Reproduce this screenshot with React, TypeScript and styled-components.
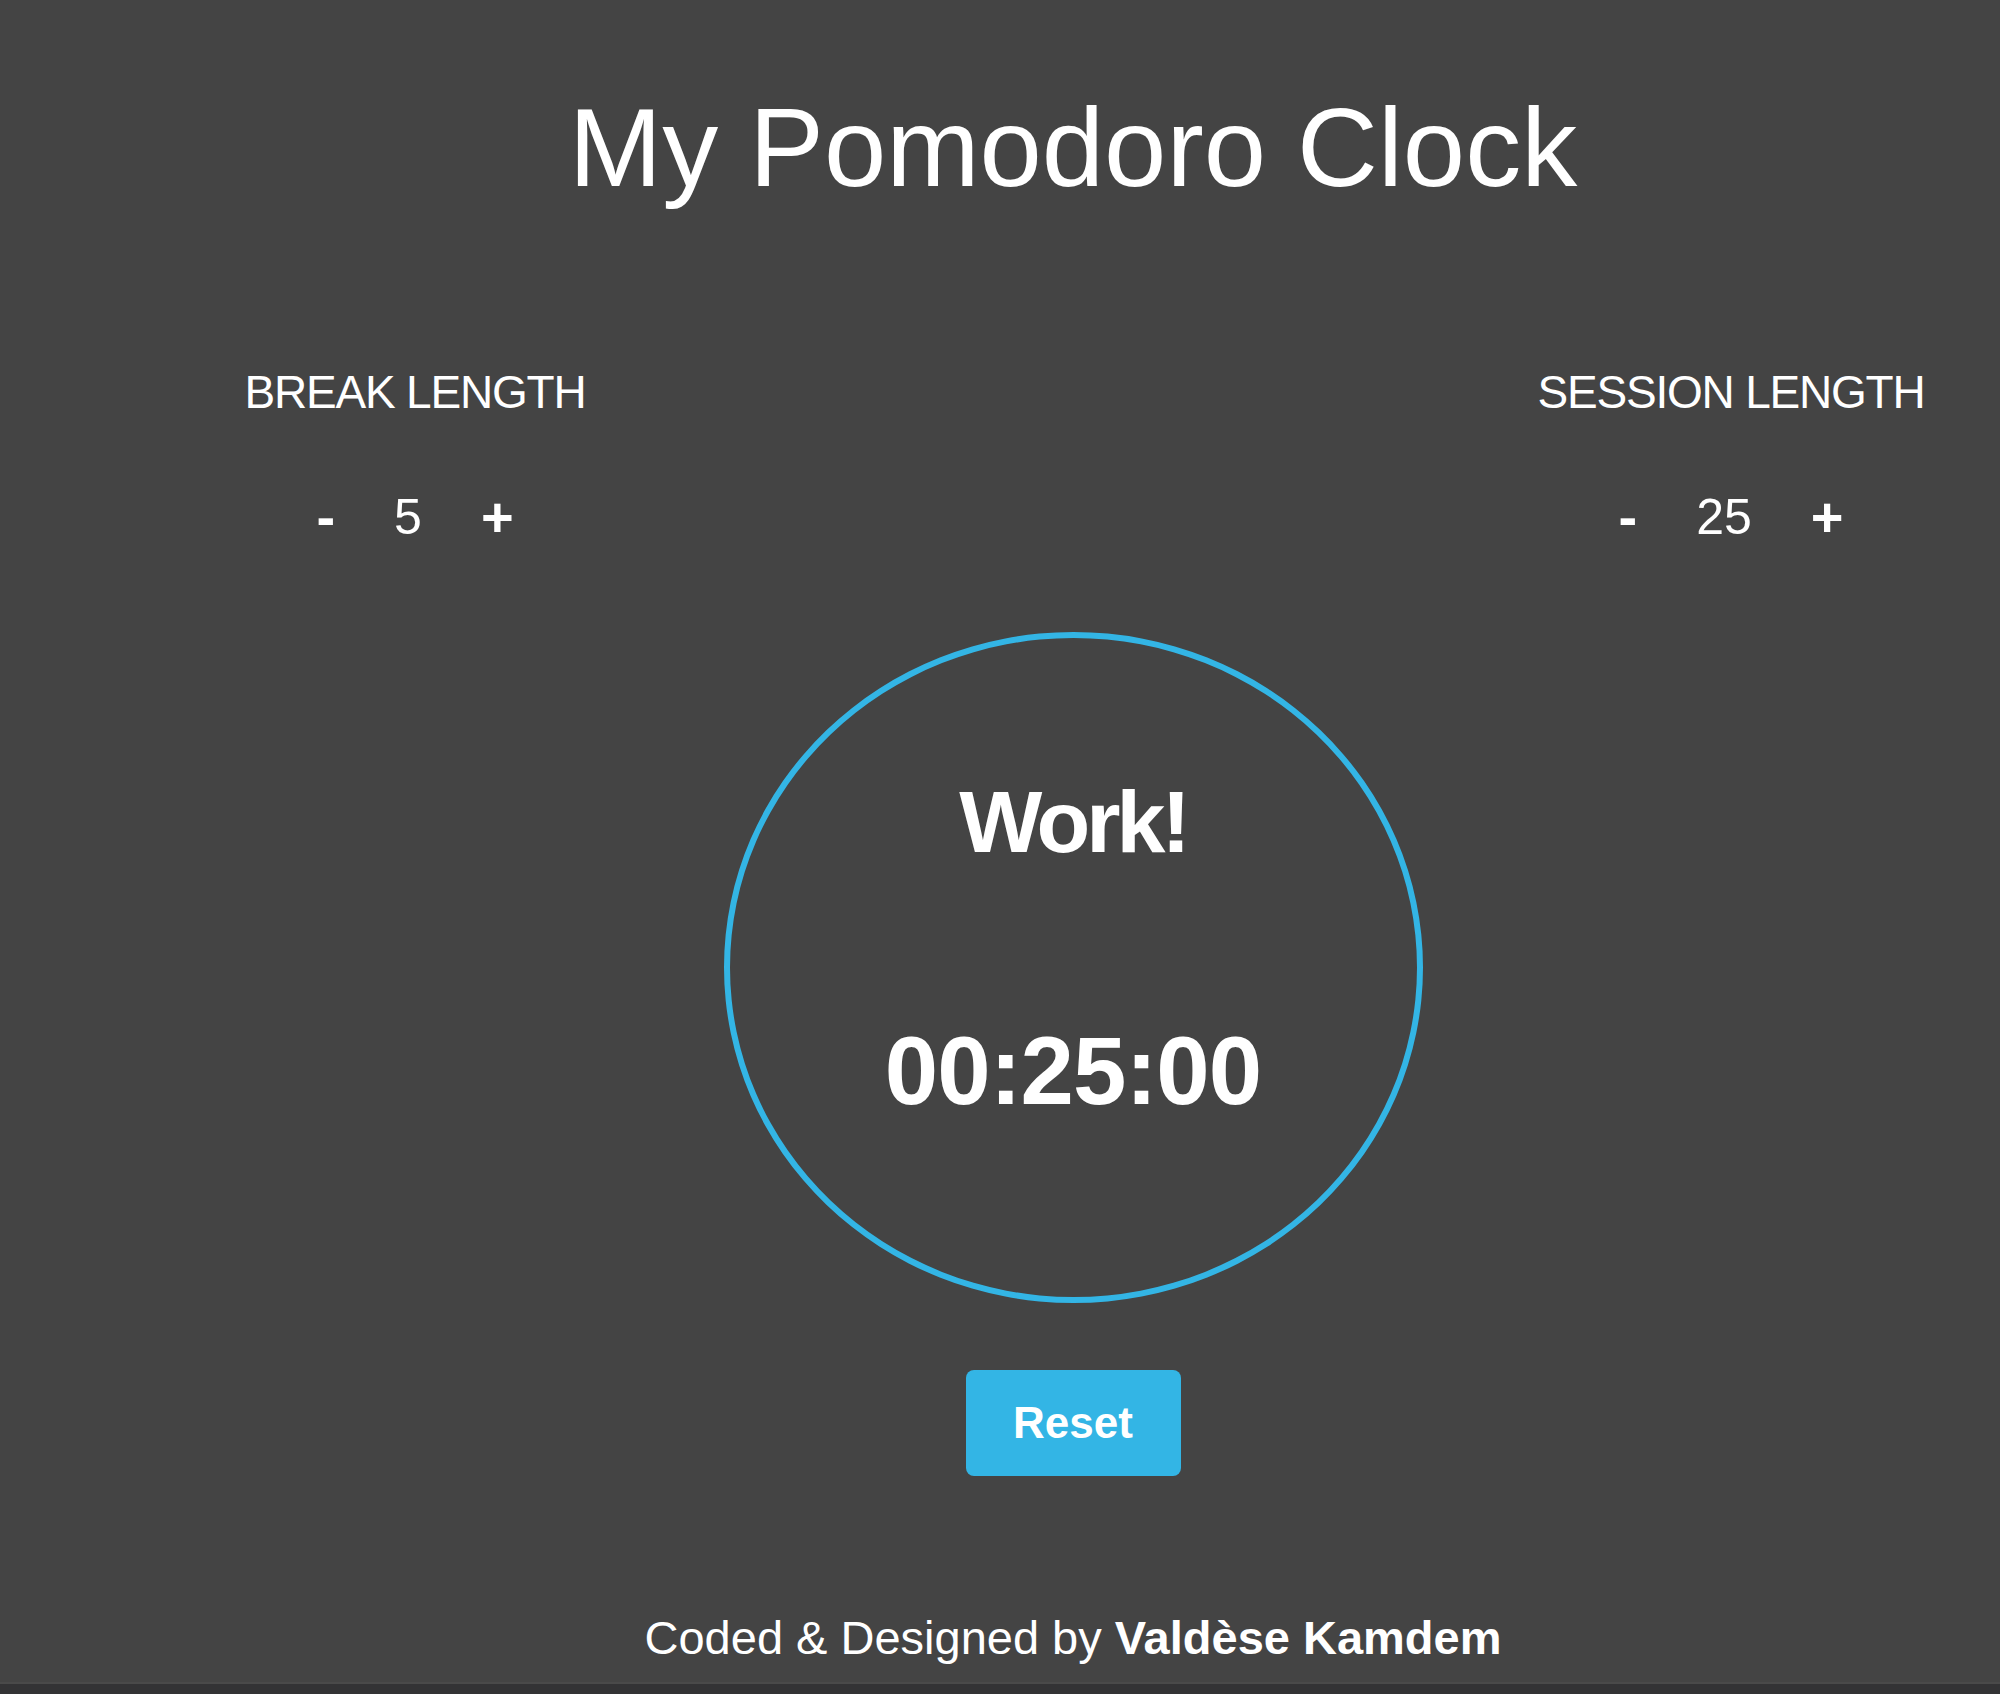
import React, { useState } from 'react';
import styled, { createGlobalStyle } from 'styled-components';

const GlobalStyle = createGlobalStyle`
  html,
  body {
    margin: 0;
    padding: 0;
    background: #444444;
    color: #ffffff;
    font-family: 'Liberation Sans', Arial, Helvetica, sans-serif;
    overflow: hidden;
  }
`;

const Page = styled.div`
  min-height: 1694px;
  display: flex;
  flex-direction: column;
`;

const Main = styled.main`
  flex: 1;
  margin-left: 146px;
  display: flex;
  flex-direction: column;
  align-items: center;
`;

const Title = styled.h1`
  margin: 92px 0 0;
  font-size: 112px;
  line-height: 1;
  font-weight: 400;
`;

const SettingsRow = styled.div`
  width: 1716px;
  margin-top: 165px;
  display: flex;
  justify-content: space-between;
`;

const Setting = styled.div`
  width: 400px;
  display: flex;
  flex-direction: column;
  align-items: center;
`;

const Label = styled.div`
  font-size: 46px;
  line-height: 1;
  letter-spacing: -1.2px;
  white-space: nowrap;
`;

const Controls = styled.div`
  margin-top: 74px;
  display: flex;
  align-items: center;
  gap: 59px;
`;

const StepButton = styled.button`
  padding: 0;
  border: none;
  background: none;
  color: #ffffff;
  font-family: inherit;
  font-size: 56px;
  font-weight: 700;
  line-height: 1;
  cursor: pointer;
`;

const Value = styled.span`
  font-size: 50px;
  line-height: 1;
`;

const Circle = styled.div`
  box-sizing: border-box;
  width: 699px;
  height: 671px;
  margin-top: 87px;
  padding-top: 140px;
  border: 6px solid #33b5e5;
  border-radius: 50%;
  display: flex;
  flex-direction: column;
  align-items: center;
`;

const Phase = styled.div`
  font-size: 88px;
  font-weight: 700;
  letter-spacing: -4px;
  line-height: 1;
`;

const Time = styled.div`
  margin-top: 157px;
  font-size: 96px;
  font-weight: 700;
  letter-spacing: -1px;
  line-height: 1;
`;

const ResetButton = styled.button`
  width: 215px;
  height: 106px;
  margin-top: 67px;
  border: none;
  border-radius: 8px;
  background: #33b5e5;
  color: #ffffff;
  font-family: inherit;
  font-size: 44px;
  font-weight: 700;
  cursor: pointer;
`;

const Footer = styled.footer`
  margin-top: 138px;
  font-size: 47px;
  line-height: 1;
  white-space: nowrap;

  strong {
    font-weight: 700;
  }
`;

const BottomBar = styled.div`
  height: 10px;
  border-top: 2px solid #4a4a4a;
  background: #333335;
`;

const pad = (n: number) => String(n).padStart(2, '0');

const App = () => {
  const [breakLength, setBreakLength] = useState(5);
  const [sessionLength, setSessionLength] = useState(25);

  const reset = () => {
    setBreakLength(5);
    setSessionLength(25);
  };

  const hours = Math.floor(sessionLength / 60);
  const minutes = sessionLength % 60;

  return (
    <Page>
      <GlobalStyle />
      <Main>
        <Title>My Pomodoro Clock</Title>
        <SettingsRow>
          <Setting>
            <Label>BREAK LENGTH</Label>
            <Controls>
              <StepButton onClick={() => setBreakLength((v) => Math.max(1, v - 1))}>-</StepButton>
              <Value>{breakLength}</Value>
              <StepButton onClick={() => setBreakLength((v) => Math.min(60, v + 1))}>+</StepButton>
            </Controls>
          </Setting>
          <Setting>
            <Label>SESSION LENGTH</Label>
            <Controls>
              <StepButton onClick={() => setSessionLength((v) => Math.max(1, v - 1))}>-</StepButton>
              <Value>{sessionLength}</Value>
              <StepButton onClick={() => setSessionLength((v) => Math.min(120, v + 1))}>+</StepButton>
            </Controls>
          </Setting>
        </SettingsRow>
        <Circle>
          <Phase>Work!</Phase>
          <Time>{`${pad(hours)}:${pad(minutes)}:00`}</Time>
        </Circle>
        <ResetButton onClick={reset}>Reset</ResetButton>
        <Footer>
          Coded &amp; Designed by <strong>Valdèse Kamdem</strong>
        </Footer>
      </Main>
      <BottomBar />
    </Page>
  );
};

export default App;
